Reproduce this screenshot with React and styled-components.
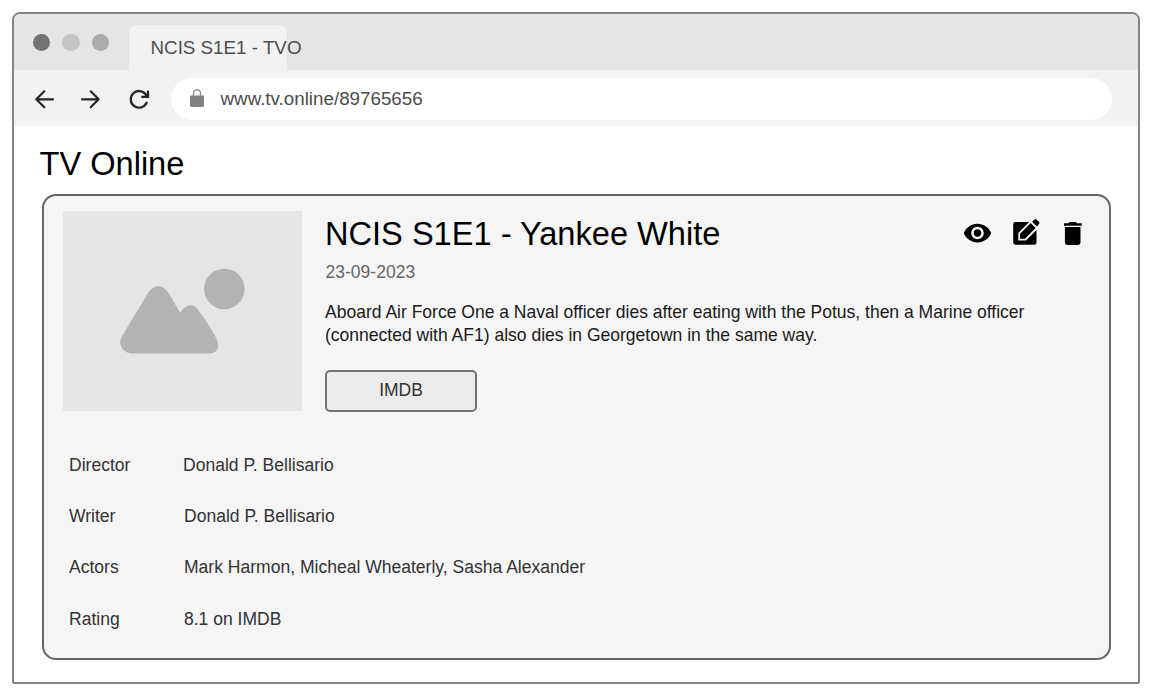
import React from "react";
import styled, { createGlobalStyle } from "styled-components";

const GlobalStyle = createGlobalStyle`
  * { box-sizing: border-box; }
  body { margin: 0; background: #fff; font-family: "Liberation Sans", Arial, sans-serif; }
  h1, h2, p, dl, dt, dd { margin: 0; font-weight: 400; }
  svg { display: block; flex: none; }
`;

const Page = styled.div`
  padding: 12px 9px 10px 12px;
  height: 694px;
`;
const Browser = styled.main`
  height: 672px;
  border: 2px solid #858585;
  border-radius: 8px 8px 2px 2px;
  overflow: hidden;
`;
const TabBar = styled.header`
  height: 56px;
  display: flex;
  align-items: flex-end;
  background: #e5e5e5;
`;
const Dots = styled.div`
  display: flex;
  gap: 12px;
  padding-left: 18.5px;
  margin-bottom: 19px;
  width: 115px;
`;
const Dot = styled.span`
  width: 17.5px;
  height: 17.5px;
  border-radius: 50%;
  background: ${(p) => p.$color};
`;
const Tab = styled.div`
  width: 157.5px;
  height: 45px;
  padding: 12px 0 0 21.5px;
  background: #f2f2f2;
  border-radius: 6px 6px 0 0;
  font-size: 18.8px;
  line-height: 22px;
  white-space: nowrap;
  color: #4d4d4d;
`;
const AddressBar = styled.div`
  height: 55.5px;
  display: flex;
  align-items: center;
  padding: 2px 26.5px 0 18px;
  background: #f2f2f2;
`;
const NavIcons = styled.nav`
  display: flex;
  width: 138.5px;
  gap: 22px;
`;
const Url = styled.div`
  flex: 1;
  height: 41.5px;
  border-radius: 21px;
  background: #fff;
  display: flex;
  align-items: center;
  gap: 16.5px;
  padding: 1px 0 0 19.5px;
  font-size: 18.8px;
  color: #4d4d4d;
`;
const Content = styled.section`
  padding: 18.5px 27px 0 28px;
`;
const Heading = styled.h1`
  font-size: 32.6px;
  line-height: 38px;
  margin-left: -2.5px;
  padding-top: 1px;
  color: #000;
`;
const Card = styled.article`
  height: 466px;
  margin-top: 10.5px;
  border: 2px solid #666;
  border-radius: 14px;
  background: #f5f5f5;
  padding: 15px 27px 0 19px;
`;
const Summary = styled.div`
  display: flex;
  gap: 23px;
`;
const Poster = styled.div`
  width: 239px;
  height: 200px;
  background: #e5e5e5;
`;
const Details = styled.div`
  flex: 1;
  padding-top: 4px;
`;
const TitleRow = styled.div`
  display: flex;
  justify-content: space-between;
  height: 38px;
`;
const Title = styled.h2`
  font-size: 32.6px;
  line-height: 38px;
  color: #000;
`;
const Actions = styled.div`
  display: flex;
  align-items: center;
  height: 36px;
`;
const ActionIcon = styled.svg`
  margin-left: ${(p) => p.$gap || 0}px;
`;
const DateText = styled.p`
  margin: 8.5px 0 0 0.5px;
  font-size: 17.55px;
  line-height: 22px;
  color: #666;
`;
const Description = styled.p`
  margin-top: 18px;
  font-size: 17.53px;
  line-height: 23px;
  color: #1a1a1a;
  white-space: nowrap;
`;
const Button = styled.button`
  display: block;
  width: 152px;
  height: 42px;
  margin-top: 22.5px;
  padding: 0 0 1px;
  border: 2px solid #737373;
  border-radius: 5px;
  background: #ebebeb;
  font: 17.5px "Liberation Sans", Arial, sans-serif;
  color: #333;
`;
const Facts = styled.dl`
  margin: 28px 0 0 6px;
`;
const Fact = styled.div`
  display: grid;
  grid-template-columns: 115px 1fr;
  height: 51.3px;
  align-items: center;
  font-size: 17.54px;
  color: #333;
  &:first-child {
    grid-template-columns: 114px 1fr;
  }
`;
const LockIcon = styled.svg`
  margin-top: -2px;
`;

const facts = [
  ["Director", "Donald P. Bellisario"],
  ["Writer", "Donald P. Bellisario"],
  ["Actors", "Mark Harmon, Micheal Wheaterly, Sasha Alexander"],
  ["Rating", "8.1 on IMDB"],
];

const stroke = { fill: "none", stroke: "#262626", strokeWidth: 2.2, strokeLinecap: "round", strokeLinejoin: "round" };

export default function App() {
  return (
    <Page>
      <GlobalStyle />
      <Browser>
        <TabBar>
          <Dots>
            <Dot $color="#737373" />
            <Dot $color="#c4c4c4" />
            <Dot $color="#ababab" />
          </Dots>
          <Tab>NCIS S1E1 - TVO</Tab>
        </TabBar>
        <AddressBar>
          <NavIcons>
            <svg width="25" height="24" viewBox="0 0 25 24" {...stroke}><path d="M21 12.300H4.300M12.300 4.300 4.300 12.300l8 8" /></svg>
            <svg width="25" height="24" viewBox="0 0 25 24" {...stroke}><path d="M3 12.300h16.700M11.700 4.300 19.700 12.300l-8 8" /></svg>
            <svg width="25" height="24" viewBox="0 0 25 24" {...stroke} strokeWidth="2.300" strokeLinejoin="miter">
              <path d="M20.600 15.800A8.300 8.300 0 1 1 19.600 7.200L21 9M22 4.600v5.200H16.200" />
            </svg>
          </NavIcons>
          <Url>
            <LockIcon width="14" height="18" viewBox="0 0 14 18">
              <path d="M3.500 8V4.300a3.500 3.500 0 0 1 7 0V8" fill="none" stroke="#919191" strokeWidth="1.4" />
              <rect y="6.500" width="14" height="11.500" rx="1.400" fill="#808080" />
            </LockIcon>
            www.tv.online/89765656
          </Url>
        </AddressBar>
        <Content>
          <Heading>TV Online</Heading>
          <Card>
            <Summary>
              <Poster>
                <svg width="239" height="200" viewBox="0 0 239 200" fill="#b3b3b3">
                  <circle cx="161.300" cy="78" r="20.300" />
                  <path d="M85 82Q95 68 105.500 82L117 101.500Q126.500 88.500 135 98.500C142 108 149 119.500 153.500 127.500Q158.500 140 148 142.500H70C61 142.500 54.500 135 58.500 126Z" />
                </svg>
              </Poster>
              <Details>
                <TitleRow>
                  <Title>NCIS S1E1 - Yankee White</Title>
                  <Actions>
                    <ActionIcon width="30" height="30" viewBox="0.400 0 24 24">
                      <path d="M12 4.500C7 4.500 2.730 7.610 1 12c1.730 4.390 6 7.500 11 7.500s9.270-3.110 11-7.500c-1.730-4.390-6-7.500-11-7.500M12 17c-2.760 0-5-2.240-5-5s2.240-5 5-5 5 2.240 5 5-2.240 5-5 5m0-8c-1.660 0-3 1.340-3 3s1.340 3 3 3 3-1.340 3-3-1.340-3-3-3" />
                    </ActionIcon>
                    <ActionIcon $gap={15} width="36" height="36" viewBox="0.500 1 36 36">
                      <path d="M8 8H21.800L10.800 19V26.500H18.500L29 16V28.500Q29 30.800 26.700 30.800H8Q5.700 30.800 5.700 28.500V10.300Q5.700 8 8 8Z" />
                      <path d="M12.500 24.800V19.800L23.200 9.100L28.200 14.100L17.500 24.800Z" />
                      <path d="M24.600 7.800L27 5.500Q28.200 4.500 29.500 5.700L31.500 7.700Q32.500 8.900 31.500 10.100L29.300 12.500Z" />
                    </ActionIcon>
                    <ActionIcon $gap={20} width="18" height="24" viewBox="0.300 -0.900 18 24">
                      <path d="M0.300 1.300H4.600L6 0H12L13.400 1.300H18V3.800H0.300ZM1.200 5.200H16.800V20.700Q16.800 23 14.300 23H3.700Q1.200 23 1.200 20.700Z" />
                    </ActionIcon>
                  </Actions>
                </TitleRow>
                <DateText>23-09-2023</DateText>
                <Description>
                  Aboard Air Force One a Naval officer dies after eating with the Potus, then a Marine officer
                  <br />
                  (connected with AF1) also dies in Georgetown in the same way.
                </Description>
                <Button>IMDB</Button>
              </Details>
            </Summary>
            <Facts>
              {facts.map(([label, value]) => (
                <Fact key={label}>
                  <dt>{label}</dt>
                  <dd>{value}</dd>
                </Fact>
              ))}
            </Facts>
          </Card>
        </Content>
      </Browser>
    </Page>
  );
}
